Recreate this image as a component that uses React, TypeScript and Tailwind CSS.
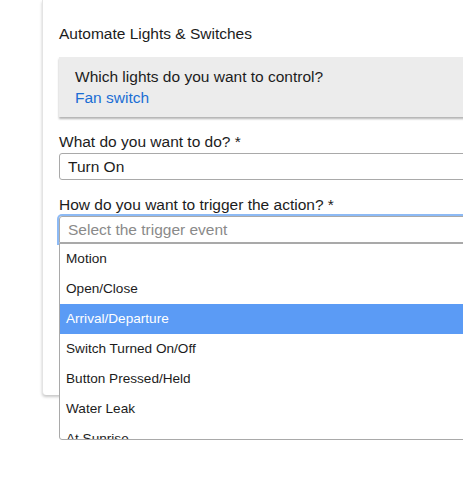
const TRIGGERS = [
  'Motion',
  'Open/Close',
  'Arrival/Departure',
  'Switch Turned On/Off',
  'Button Pressed/Held',
  'Water Leak',
  'At Sunrise',
];

const ACTIVE = 'Arrival/Departure';

export default function App() {
  return (
    <div className="h-[500px] w-[463px] overflow-hidden bg-white font-['Liberation_Sans',Arial,sans-serif] text-[#1c1c1c]">
      <div className="ml-[42px] w-[460px] rounded-bl-[4px] border-l border-[#e4e4e4] bg-white pb-[152px] pl-4 pt-6 shadow-[0_2px_3px_rgba(0,0,0,0.22)]">
        <h1 className="text-[15.5px] leading-5">Automate Lights &amp; Switches</h1>

        <div className="mt-[13px] bg-[#ececec] px-4 py-[9px] shadow-[0_2px_2px_rgba(0,0,0,0.3)]">
          <p className="text-[15.5px] leading-[21px]">Which lights do you want to control?</p>
          <p className="text-[15.5px] leading-[21px] text-[#1b6ed4]">Fan switch</p>
        </div>

        <label className="mt-[15px] block text-[15.5px] leading-5">What do you want to do? *</label>
        <div className="mt-px flex h-[27px] items-center rounded-[3px] border border-[#a9a9a9] px-2 text-[15.5px]">
          Turn On
        </div>

        <label className="mt-[15px] block text-[15.5px] leading-5">
          How do you want to trigger the action? *
        </label>
        <div className="relative mt-px">
          <div className="flex h-[27px] items-center rounded-t-[3px] border border-[#a9a9a9] px-2 text-[15.5px] text-[#8a8a8a] shadow-[0_0_0_2px_#8dbaf5]">
            Select the trigger event
          </div>
          <ul className="absolute left-0 top-full z-10 h-[197px] w-[420px] overflow-hidden rounded-b-[3px] border border-[#a9a9a9] bg-white">
            {TRIGGERS.map((t) => (
              <li
                key={t}
                className={`flex h-[30px] items-center px-[6px] text-[13.6px] ${
                  t === ACTIVE ? 'bg-[#5b9bf5] text-white' : 'text-[#1c1c1c]'
                }`}
              >
                {t}
              </li>
            ))}
          </ul>
        </div>
      </div>
    </div>
  );
}
